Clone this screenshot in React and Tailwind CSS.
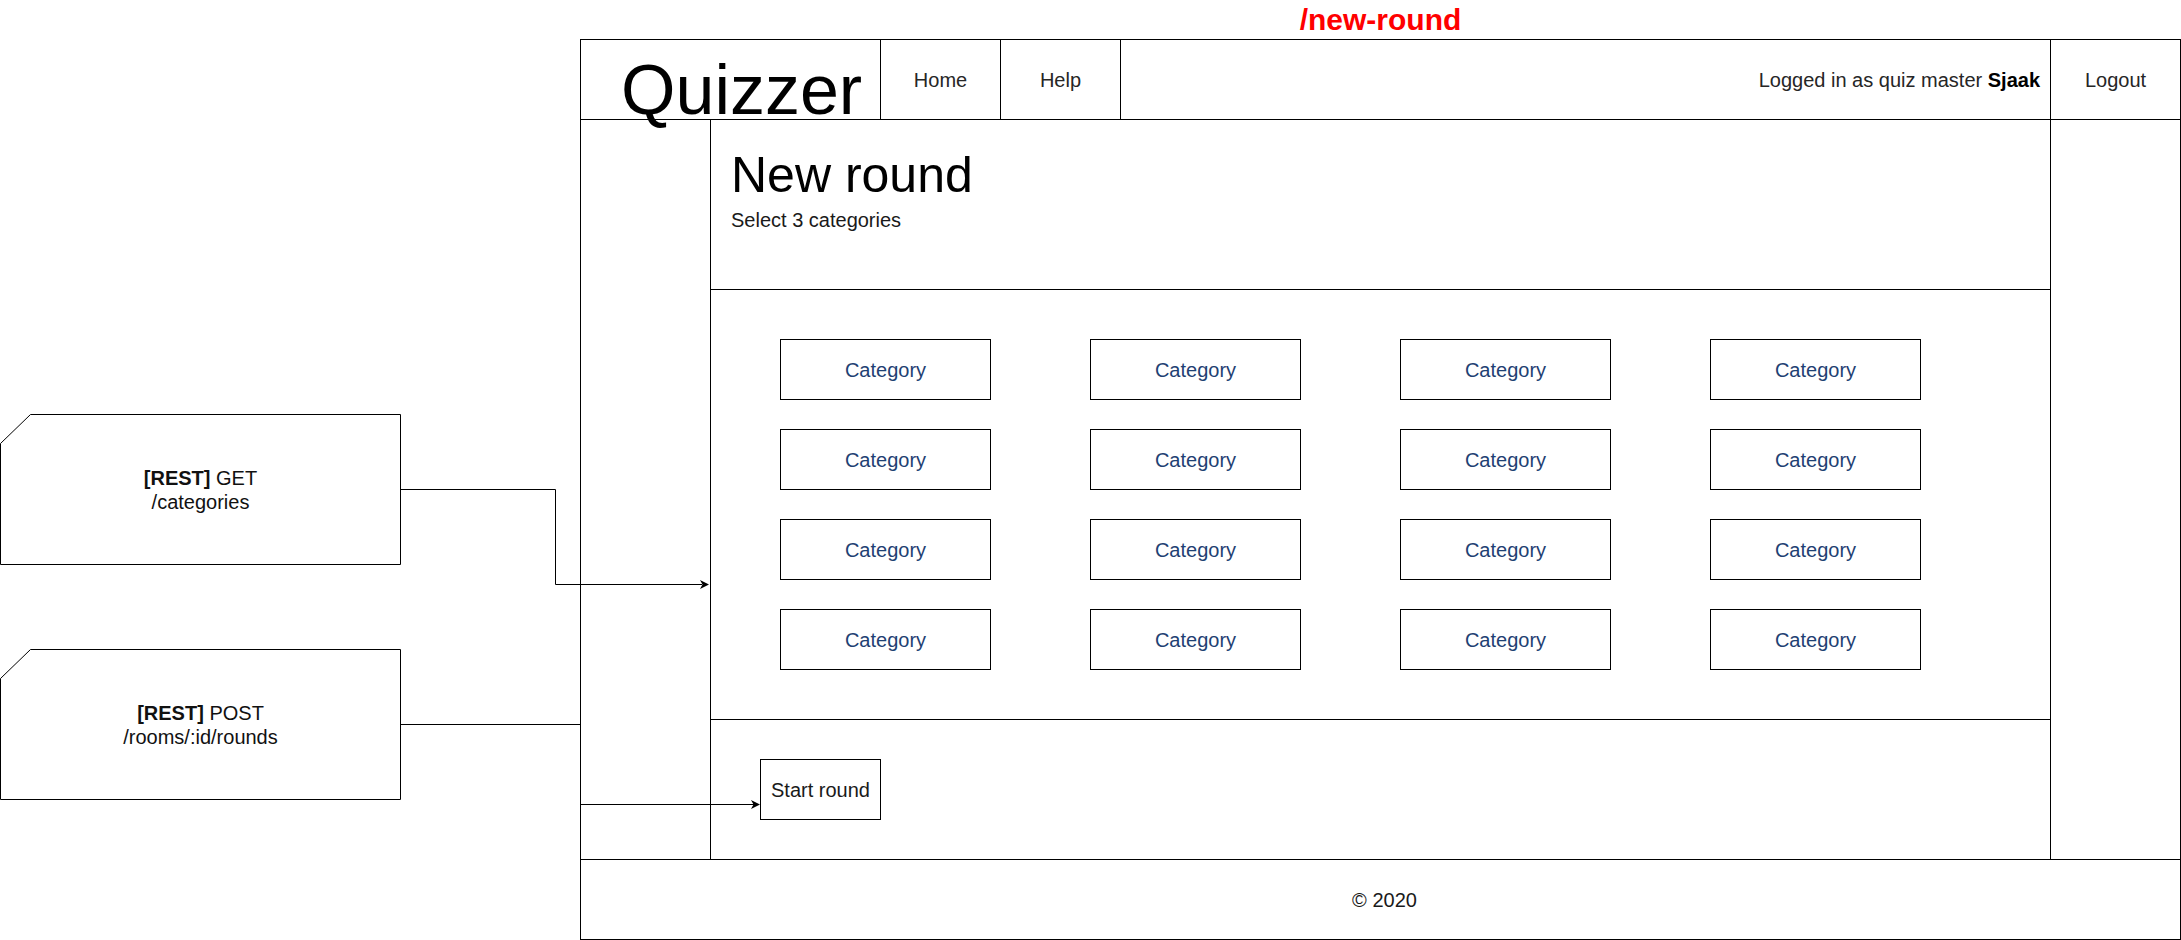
import React from "react";

const categories = Array.from({ length: 16 }, (_, i) => ({ id: i, label: "Category" }));

const RestNode = ({ className, method, path }) => (
  <div className={`absolute left-0 w-[401px] h-[151px] ${className}`}>
    <svg className="absolute inset-0" width="401" height="151" viewBox="0 0 401 151">
      <polygon
        points="0.5,29.5 30.5,0.5 400.5,0.5 400.5,150.5 0.5,150.5"
        fill="white"
        stroke="black"
        strokeWidth="1"
      />
    </svg>
    <div className="relative h-full flex flex-col items-center justify-center text-[20px] leading-[24px] text-[#111]">
      <div>
        <span className="font-bold">[REST]</span> {method}
      </div>
      <div>{path}</div>
    </div>
  </div>
);

export default function App() {
  return (
    <div className="relative w-[2181px] h-[940px] bg-white overflow-hidden font-['Liberation_Sans',Arial,sans-serif] text-[#1a1a1a]">
      {/* page route label */}
      <div className="ml-[580px] w-[1601px] h-[39px] flex items-center justify-center">
        <span className="text-[30px] font-bold text-[#ff0000] leading-none">/new-round</span>
      </div>

      {/* wireframe */}
      <div className="ml-[580px] w-[1601px] h-[901px] border border-black flex flex-col">
        {/* header */}
        <div className="h-[80px] border-b border-black flex shrink-0">
          <div className="w-[300px] border-r border-black pl-[40px] pt-[15px]">
            <div className="text-[70px] leading-[70px] text-black">Quizzer</div>
          </div>
          <div className="w-[120px] border-r border-black flex items-center justify-center text-[20px] text-[#262626]">
            Home
          </div>
          <div className="w-[120px] border-r border-black flex items-center justify-center text-[20px] text-[#262626]">
            Help
          </div>
          <div className="flex-1 flex items-center justify-end pr-[10px] text-[20px] text-[#262626]">
            <span>
              Logged in as quiz master <span className="font-bold text-black">Sjaak</span>
            </span>
          </div>
          <div className="w-[130px] border-l border-black flex items-center justify-center text-[20px] text-[#262626]">
            Logout
          </div>
        </div>

        {/* body */}
        <div className="flex-1 flex">
          <div className="w-[130px] border-r border-black"></div>

          <div className="flex-1 flex flex-col">
            {/* title */}
            <div className="h-[170px] border-b border-black pl-5 pt-[30px]">
              <h1 className="text-[50px] leading-[50px] text-black">New round</h1>
              <p className="mt-[10px] text-[20px] leading-[20px] text-[#1a1a1a]">Select 3 categories</p>
            </div>

            {/* categories */}
            <div className="h-[430px] border-b border-black pl-[69px] pt-[49px]">
              <div className="grid grid-cols-[repeat(4,211px)] gap-x-[99px] gap-y-[29px]">
                {categories.map((c) => (
                  <div
                    key={c.id}
                    className="h-[61px] border border-black flex items-center justify-center text-[20px] text-[#1f4173]"
                  >
                    {c.label}
                  </div>
                ))}
              </div>
            </div>

            {/* actions */}
            <div className="flex-1 pl-[49px] pt-[39px]">
              <button
                type="button"
                className="w-[121px] h-[61px] border border-black flex items-center justify-center text-[20px] text-[#1a1a1a] bg-white"
              >
                Start round
              </button>
            </div>
          </div>

          <div className="w-[130px] border-l border-black"></div>
        </div>

        {/* footer */}
        <div className="h-[80px] border-t border-black flex items-center justify-center pl-[8px] text-[20px] text-[#1a1a1a] shrink-0">
          © 2020
        </div>
      </div>

      {/* REST endpoints */}
      <RestNode className="top-[414px]" method="GET" path="/categories" />
      <RestNode className="top-[649px]" method="POST" path="/rooms/:id/rounds" />

      {/* connectors */}
      <svg
        className="absolute inset-0 pointer-events-none"
        width="2181"
        height="940"
        viewBox="0 0 2181 940"
      >
        <path d="M401 489.5 H555.5 V584.5 H702" fill="none" stroke="black" strokeWidth="1" />
        <path d="M709 584.5 L700 580 L702.5 584.5 L700 589 Z" fill="black" />
        <path d="M401 724.5 H580" fill="none" stroke="black" strokeWidth="1" />
        <path d="M580 804.5 H754" fill="none" stroke="black" strokeWidth="1" />
        <path d="M760 804.5 L751 800 L753.5 804.5 L751 809 Z" fill="black" />
      </svg>
    </div>
  );
}
